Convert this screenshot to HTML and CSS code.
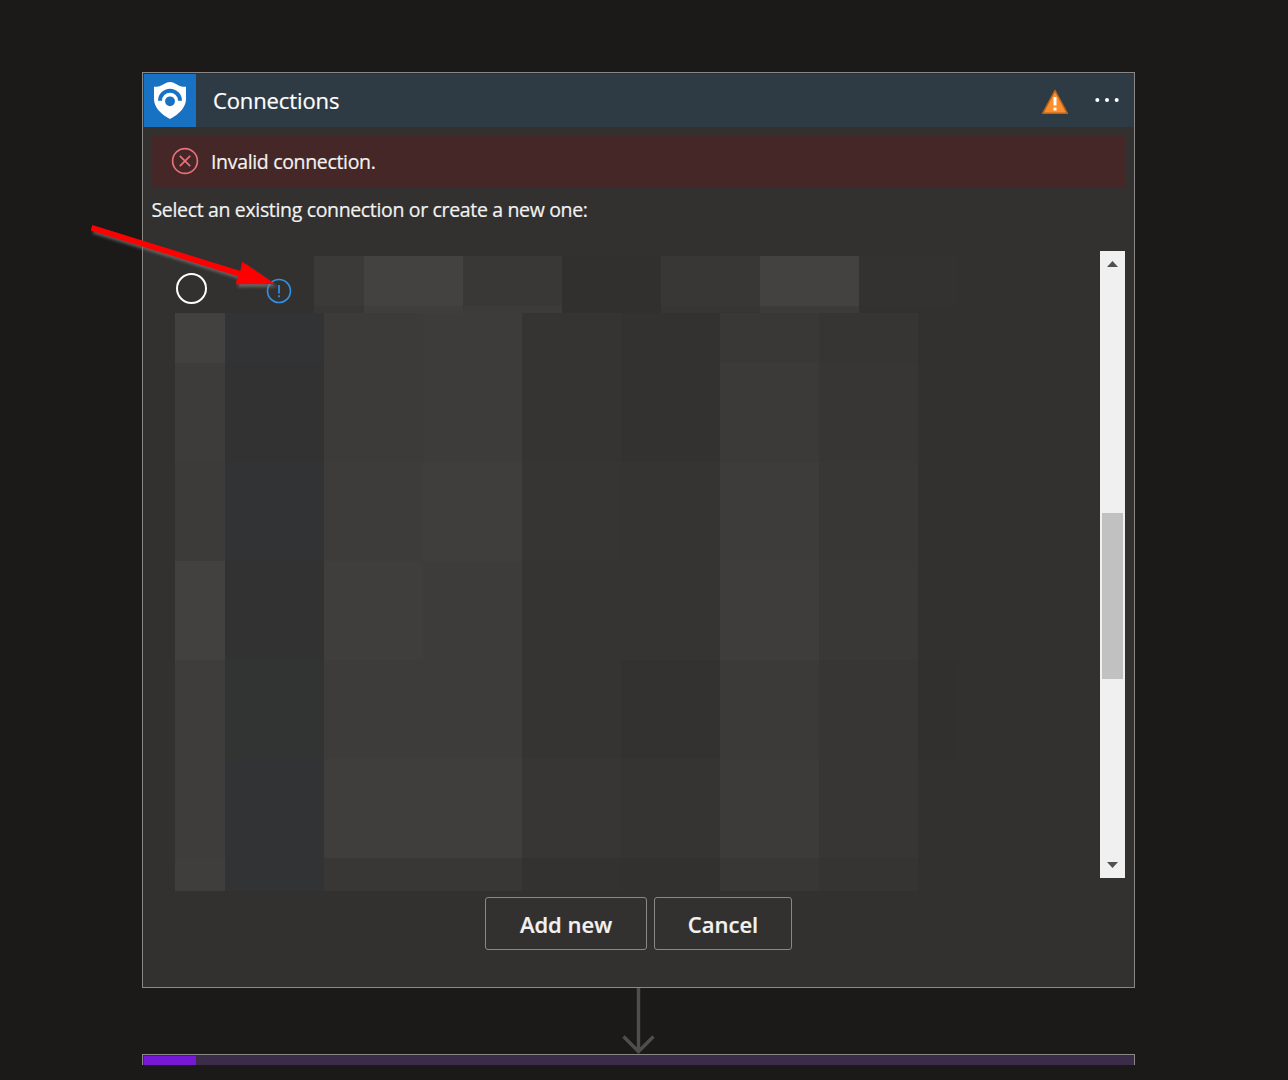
FILE: index.html
```html
<!DOCTYPE html>
<html lang="en">
<head>
<meta charset="utf-8">
<title>Connections</title>
<link rel="stylesheet" href="styles.css">
</head>
<body>
<main class="canvas">
  <section class="card">
    <header class="card-header">
      <div class="brand">
        <svg width="52" height="53" viewBox="0 0 52 53">
          <path d="M10 12.800c4.500 0 6.800-.800 10-2.800q3-2 6-2t6 2c3.200 2 5.500 2.800 10 2.800V25c0 8-6.500 15-16 20-9.500-5-16-12-16-20z" fill="#fff"/>
          <path d="M16 26.700a10 10 0 0 1 20 0" fill="none" stroke="#1872c4" stroke-width="4"/>
          <circle cx="26" cy="27.300" r="4.900" fill="#1872c4"/>
        </svg>
      </div>
      <h1 class="title"><span>Connections</span></h1>
      <svg class="warning" width="28" height="26" viewBox="0 0 28 26">
        <path d="M14 1.500 26.300 24.300H1.700z" fill="#ff8c2b" stroke="#b5651d" stroke-width="1.500" stroke-linejoin="round"/>
        <path d="M12.500 8h3v8.500h-3zM12.500 18.500h3v3h-3z" fill="#fff"/>
      </svg>
      <svg class="more" width="26" height="6" viewBox="0 0 26 6">
        <g fill="#fff"><circle cx="3.300" cy="3" r="2"/><circle cx="13" cy="3" r="2"/><circle cx="22.700" cy="3" r="2"/></g>
      </svg>
    </header>
    <div class="error">
      <svg class="error-icon" width="28" height="28" viewBox="0 0 28 28" fill="none" stroke="#e9707a" stroke-width="1.700">
        <circle cx="14" cy="14" r="12.400"/><path d="M8.800 8.800l10.400 10.400M19.200 8.800L8.800 19.200"/>
      </svg>
      <span class="error-text">Invalid connection.</span>
    </div>
    <p class="prompt"><span class="prompt-text">Select an existing connection or create a new one:</span></p>
    <div class="list">
      <div class="rows">
        <div class="row">
          <span class="radio"></span>
          <svg class="info" width="26" height="26" viewBox="0 0 26 26" stroke="#3391e6" fill="none">
            <circle cx="13" cy="13" r="11.500" stroke-width="1.600"/>
            <path d="M13 7v8.500M13 17.300v2" stroke-width="1.700"/>
          </svg>
          <div class="mask mask-top">
            <i class="g3b"></i><i class="g43"></i><i class="g39"></i><i class="g31"></i><i class="g38"></i><i class="g43"></i><i class="g33"></i>
            <i class="g38"></i><i class="g3f"></i><i class="g3c"></i><i class="g31"></i><i class="g36"></i><i class="g3c"></i><i class="g32"></i>
          </div>
        </div>
        <div class="mask mask-body">
          <i class="g42"></i><i class="blue"></i><i class="g3c"></i><i class="g3d"></i><i class="g34"></i><i class="g33"></i><i class="g39"></i><i class="g36"></i><i class="g32"></i>
          <i class="g3d"></i><i class="g31n"></i><i class="g3c"></i><i class="g3d"></i><i class="g34"></i><i class="g33"></i><i class="g3b"></i><i class="g37"></i><i class="g32"></i>
          <i class="g3c"></i><i class="blue"></i><i class="g3d"></i><i class="g3f"></i><i class="g36"></i><i class="g34"></i><i class="g3d"></i><i class="g38"></i><i class="g32"></i>
          <i class="g42"></i><i class="g31n"></i><i class="g3f"></i><i class="g3d"></i><i class="g34"></i><i class="g34"></i><i class="g3e"></i><i class="g39"></i><i class="g32"></i>
          <i class="g3e"></i><i class="green"></i><i class="g3d"></i><i class="g3d"></i><i class="g34"></i><i class="g33"></i><i class="g3b"></i><i class="g37"></i><i class="g31"></i>
          <i class="g3e"></i><i class="blue"></i><i class="g3f"></i><i class="g3f"></i><i class="g37"></i><i class="g34"></i><i class="g3c"></i><i class="g37"></i><i class="g32"></i>
          <i class="g3f"></i><i class="blue"></i><i class="g38"></i><i class="g38"></i><i class="g33"></i><i class="g32"></i><i class="g38"></i><i class="g34"></i><i class="g32"></i>
        </div>
      </div>
      <div class="scrollbar">
        <svg width="11" height="6" viewBox="0 0 11 6"><path d="M5.500 0L11 6H0z" fill="#505050"/></svg>
        <div class="thumb"></div>
        <svg class="down" width="11" height="6" viewBox="0 0 11 6"><path d="M0 0h11L5.500 6z" fill="#505050"/></svg>
      </div>
    </div>
    <div class="actions">
      <button class="button add"><span>Add new</span></button>
      <button class="button cancel"><span>Cancel</span></button>
    </div>
  </section>
  <svg class="connector" width="34" height="66" viewBox="0 0 34 66" fill="none" stroke="#4f4e4d" stroke-width="3.400">
    <path d="M16.500 0v63M1.500 48.500l15 15 15-15"/>
  </svg>
  <section class="next-card"><div class="next-brand"></div></section>
  <svg class="pointer" width="200" height="75" viewBox="85 220 200 75">
    <path d="M92.300 225L240.300 271l2-9.300L275 284l-39.300.300 2-8L90.700 230.500z" fill="#f00"/>
  </svg>
</main>
</body>
</html>
```
FILE: styles.css
```css
* { box-sizing: border-box; }
body {
  margin: 0;
  background: #1b1a19;
  color: #f3f2f1;
  font-family: "Open Sans", "Noto Sans", sans-serif;
}
.canvas {
  position: relative;
  display: flex;
  flex-direction: column;
  width: 1288px;
  height: 1080px;
  padding: 72px 0 0 142px;
  overflow: hidden;
}
svg { display: block; flex: none; }
.card {
  display: flex;
  flex-direction: column;
  flex: none;
  width: 993px;
  height: 916px;
  padding-top: 1px;
  border: 1px solid #8a8886;
  background: #323130;
}
.card-header {
  display: flex;
  align-items: center;
  height: 53px;
  padding: 0 14px 0 1px;
  background: #2e3b45;
}
.brand { width: 52px; height: 53px; background: #1872c4; }
.title {
  flex: 1;
  margin: 0 0 0 17px;
  color: #fff;
  font-size: 22px;
  font-weight: 400;
  line-height: 53px;
  white-space: nowrap;
}
.title span { letter-spacing: -0.12px; -webkit-text-stroke: 0.2px; }
.warning { margin: 2px 25px 0 0; }
.more { margin-top: -1px; }
.error {
  display: flex;
  align-items: center;
  height: 53px;
  margin: 8px 9px 0;
  padding-left: 18px;
  background: #442726;
}
.error-icon { margin: -1px -0.500px 0 0.500px; }
.error-text {
  margin-left: 13px;
  font-size: 19.5px;
  letter-spacing: -0.33px;
  white-space: nowrap;
  -webkit-text-stroke: 0.2px;
}
.prompt {
  height: 63px;
  margin: 0 9px;
  font-size: 19.5px;
  line-height: 44px;
  white-space: nowrap;
}
.prompt-text { margin-left: -0.500px; letter-spacing: -0.34px; -webkit-text-stroke: 0.2px; }
.list {
  display: flex;
  justify-content: space-between;
  height: 640px;
  padding: 0 9px 0 32px;
}
.rows { padding-top: 5px; }
.row { display: flex; height: 57px; }
.radio {
  width: 31px;
  height: 31px;
  margin: 16.500px 0 0 1px;
  border: 2px solid #fff;
  border-radius: 50%;
}
.info { margin: 22px 21.500px 0 59px; }
.mask { display: grid; }
.mask-top {
  margin-left: 0.500px;
  grid-template-columns: 50px repeat(6, 99px);
  grid-template-rows: 50px 7px;
}
.mask-body {
  grid-template-columns: 50px repeat(7, 99px) 40px;
  grid-template-rows: 50px repeat(5, 99px) 33px;
}
.g31 { background: #31302e; }
.g31n { background: #323232; }
.g32 { background: #32312f; }
.g33 { background: #343230; }
.g34 { background: #353432; }
.g36 { background: #363533; }
.g37 { background: #373634; }
.g38 { background: #383735; }
.g39 { background: #393836; }
.g3b { background: #3b3a38; }
.g3c { background: #3c3b39; }
.g3d { background: #3d3c3a; }
.g3e { background: #3e3d3b; }
.g3f { background: #3f3e3c; }
.g42 { background: #42413f; }
.g43 { background: #434241; }
.blue { background: #313335; }
.green { background: #313432; }
.scrollbar {
  display: flex;
  flex-direction: column;
  align-items: center;
  width: 25px;
  height: 627px;
  padding: 10px 0;
  background: #f0f0f0;
}
.thumb { width: 21px; height: 166px; margin-top: 246px; background: #c1c1c1; }
.down { margin-top: auto; }
.actions { display: flex; gap: 7px; padding: 6px 0 0 342px; }
.button {
  height: 53px;
  padding: 0;
  border: 1px solid #8a8886;
  border-radius: 3px;
  background: transparent;
  color: #f3f2f1;
  font: 600 22px/51px "Open Sans", "Noto Sans", sans-serif;
  white-space: nowrap;
}
.add { width: 162px; }
.cancel { width: 138px; }
.button span { position: relative; top: 1px; letter-spacing: 0; -webkit-text-stroke: 0.2px; }
.connector { margin-left: 480px; }
.next-card {
  flex: none;
  width: 993px;
  height: 11px;
  padding: 1px 0 0 1px;
  border: 1px solid #8a8886;
  border-bottom: 0;
  background: linear-gradient(#323130 1px, #3b2d49 1px);
}
.next-brand { width: 52px; height: 9px; background: #7719d4; }
.pointer {
  position: absolute;
  left: 85px;
  top: 220px;
  filter: drop-shadow(2px 3px 1.500px rgba(120, 120, 120, .7));
}
```
